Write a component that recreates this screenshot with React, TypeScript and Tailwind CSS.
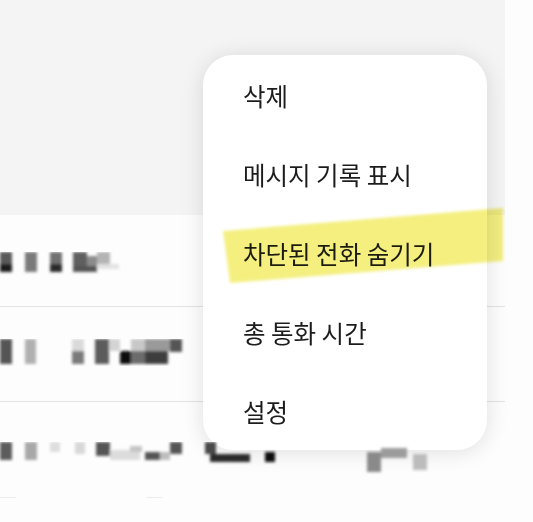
import React from 'react'

const items = ['삭제', '메시지 기록 표시', '차단된 전화 숨기기', '총 통화 시간', '설정']

type Blob = [number, number, number, number, string]

// pixelated / blurred list text, drawn as soft blocks
function Smudge({ blobs, w, h }: { blobs: Blob[]; w: number; h: number }) {
  return (
    <svg width={w} height={h} viewBox={`0 0 ${w} ${h}`} className="block">
      <defs>
        <filter id="soft" x="-20%" y="-20%" width="140%" height="140%">
          <feGaussianBlur stdDeviation="1.6" />
        </filter>
      </defs>
      <g filter="url(#soft)">
        {blobs.map(([x, y, bw, bh, c], i) => (
          <rect key={i} x={x} y={y} width={bw} height={bh} fill={c} />
        ))}
      </g>
    </svg>
  )
}

const row1: Blob[] = [
  [0, 0, 12, 12, '#5a5a5a'], [0, 12, 12, 8, '#1c1c1c'],
  [25, 0, 12, 20, '#7a7a7a'],
  [50, 0, 12, 12, '#6f6f6f'], [50, 12, 12, 8, '#2a2a2a'],
  [73, 0, 14, 14, '#5e5e5e'], [73, 14, 24, 6, '#555'], [87, 4, 10, 10, '#8c8c8c'],
  [97, 0, 13, 12, '#b4b4b4'], [97, 12, 22, 5, '#e2e2e2'],
]

const row2: Blob[] = [
  [0, 0, 12, 25, '#555'],
  [25, 0, 11, 25, '#b0b0b0'],
  [72, 0, 12, 12, '#dadada'], [72, 12, 12, 13, '#7a7a7a'],
  [95, 0, 14, 25, '#5c5c5c'], [109, 0, 11, 12, '#d4d4d4'],
  [120, 12, 11, 13, '#111'],
  [131, 0, 14, 12, '#c8c8c8'], [131, 12, 14, 13, '#6c6c6c'],
  [145, 0, 25, 12, '#9a9a9a'], [145, 12, 23, 13, '#3e3e3e'],
  [170, 0, 12, 13, '#555'],
]

const row3: Blob[] = [
  [0, 0, 12, 18, '#5c5c5c'],
  [25, 0, 12, 18, '#a8a8a8'],
  [50, 0, 10, 10, '#dedede'],
  [75, 0, 10, 12, '#d8d8d8'],
  [96, 0, 14, 14, '#555'],
  [110, 8, 30, 10, '#dcdcdc'], [130, 4, 12, 6, '#c4c4c4'],
  [145, 10, 16, 8, '#555'], [160, 10, 10, 8, '#bdbdbd'],
  [170, 0, 12, 12, '#555'],
  [205, 0, 11, 12, '#4a4a4a'],
  [210, 12, 40, 8, '#2a2a2a'],
  [265, 10, 10, 10, '#111'],
  [367, 10, 14, 20, '#8a8a8a'], [381, 6, 26, 10, '#9c9c9c'], [413, 12, 14, 16, '#bcbcbc'],
]

export default function App() {
  return (
    <div className="relative h-[522px] w-[533px] overflow-hidden bg-[#fdfdfd] font-['Noto_Sans_CJK_KR','Noto_Sans',sans-serif]">
      <div className="flex w-[505px] flex-col">
        <div className="h-[215px] bg-[#f4f4f4]" />
        <div className="flex h-[92px] items-center border-b border-[#e2e2e2] bg-[#fdfdfd] pt-[6px]">
          <Smudge blobs={row1} w={140} h={24} />
        </div>
        <div className="flex h-[95px] items-center border-b border-[#e2e2e2] bg-[#fdfdfd] pb-[4px]">
          <Smudge blobs={row2} w={200} h={27} />
        </div>
        <div className="h-[95px] bg-[#fdfdfd]" />
        <div className="flex gap-[130px]">
          <div className="h-px w-[16px] bg-[#ececec]" />
          <div className="h-px w-[16px] bg-[#ececec]" />
        </div>
      </div>

      {/* popup menu */}
      <div className="absolute left-[203px] top-[55px] flex h-[395px] w-[284px] flex-col rounded-[30px] bg-white pt-[2px] shadow-[0_2px_22px_rgba(0,0,0,0.12)]">
        {items.map((t) => (
          <div key={t} className="flex h-[79px] shrink-0 items-center pl-[40px] text-[24.5px] leading-none text-[#1c1c1c]">
            {t}
          </div>
        ))}
      </div>

      {/* marker highlight */}
      <svg className="pointer-events-none absolute left-0 top-0 mix-blend-multiply" width={533} height={522}>
        <defs>
          <filter id="brush" x="-5%" y="-20%" width="110%" height="140%">
            <feGaussianBlur stdDeviation="1.5" />
          </filter>
        </defs>
        <polygon points="223,231 503,208 503,261 230,283" fill="#f3ee72" opacity="0.9" filter="url(#brush)" />
      </svg>

      {/* blurred row 3 text runs over the menu bottom */}
      <div className="absolute left-0 top-[442px]">
        <Smudge blobs={row3} w={440} h={40} />
      </div>
    </div>
  )
}
